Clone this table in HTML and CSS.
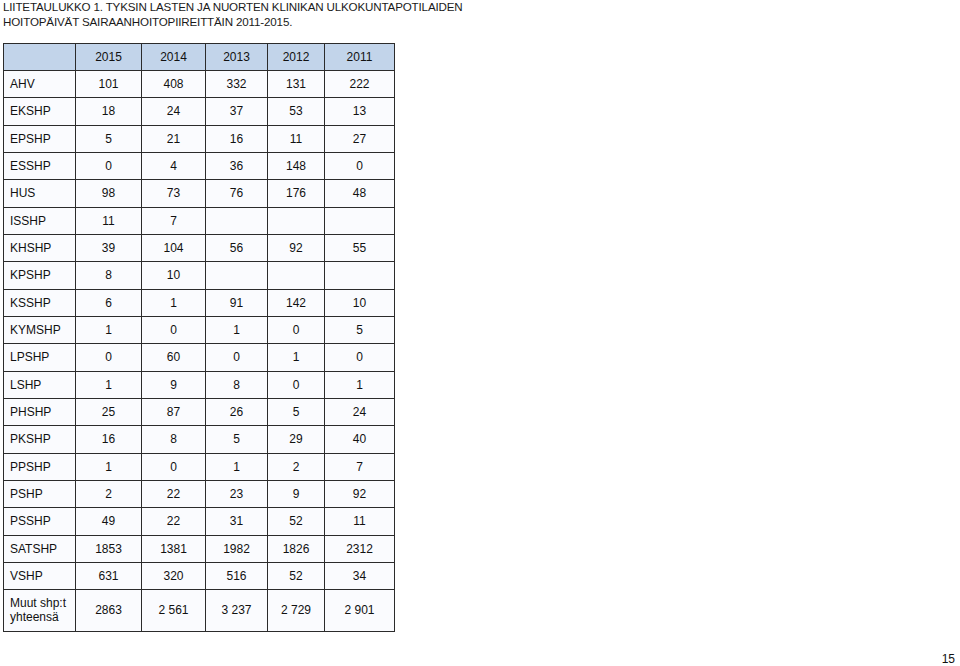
FILE: index.html
```html
<!DOCTYPE html>
<html>
<head>
<meta charset="utf-8">
<link rel="stylesheet" href="styles.css">
</head>
<body>
<div class="page">
  <div class="title">LIITETAULUKKO 1. TYKSIN LASTEN JA NUORTEN KLINIKAN ULKOKUNTAPOTILAIDEN<br>HOITOPÄIVÄT SAIRAANHOITOPIIREITTÄIN 2011-2015.</div>
  <table class="data">
    <colgroup>
      <col class="c0"><col class="c1"><col class="c2"><col class="c3"><col class="c4"><col class="c5">
    </colgroup>
    <thead>
      <tr class="head"><th></th><th>2015</th><th>2014</th><th>2013</th><th>2012</th><th>2011</th></tr>
    </thead>
    <tbody>
      <tr><td>AHV</td><td>101</td><td>408</td><td>332</td><td>131</td><td>222</td></tr>
      <tr><td>EKSHP</td><td>18</td><td>24</td><td>37</td><td>53</td><td>13</td></tr>
      <tr><td>EPSHP</td><td>5</td><td>21</td><td>16</td><td>11</td><td>27</td></tr>
      <tr><td>ESSHP</td><td>0</td><td>4</td><td>36</td><td>148</td><td>0</td></tr>
      <tr><td>HUS</td><td>98</td><td>73</td><td>76</td><td>176</td><td>48</td></tr>
      <tr><td>ISSHP</td><td>11</td><td>7</td><td></td><td></td><td></td></tr>
      <tr><td>KHSHP</td><td>39</td><td>104</td><td>56</td><td>92</td><td>55</td></tr>
      <tr><td>KPSHP</td><td>8</td><td>10</td><td></td><td></td><td></td></tr>
      <tr><td>KSSHP</td><td>6</td><td>1</td><td>91</td><td>142</td><td>10</td></tr>
      <tr><td>KYMSHP</td><td>1</td><td>0</td><td>1</td><td>0</td><td>5</td></tr>
      <tr><td>LPSHP</td><td>0</td><td>60</td><td>0</td><td>1</td><td>0</td></tr>
      <tr><td>LSHP</td><td>1</td><td>9</td><td>8</td><td>0</td><td>1</td></tr>
      <tr><td>PHSHP</td><td>25</td><td>87</td><td>26</td><td>5</td><td>24</td></tr>
      <tr><td>PKSHP</td><td>16</td><td>8</td><td>5</td><td>29</td><td>40</td></tr>
      <tr><td>PPSHP</td><td>1</td><td>0</td><td>1</td><td>2</td><td>7</td></tr>
      <tr><td>PSHP</td><td>2</td><td>22</td><td>23</td><td>9</td><td>92</td></tr>
      <tr><td>PSSHP</td><td>49</td><td>22</td><td>31</td><td>52</td><td>11</td></tr>
      <tr><td>SATSHP</td><td>1853</td><td>1381</td><td>1982</td><td>1826</td><td>2312</td></tr>
      <tr><td>VSHP</td><td>631</td><td>320</td><td>516</td><td>52</td><td>34</td></tr>
      <tr class="last"><td>Muut shp:t<br>yhteensä</td><td>2863</td><td>2 561</td><td>3 237</td><td>2 729</td><td>2 901</td></tr>
    </tbody>
  </table>
  <div class="pagenum">15</div>
</div>
</body>
</html>
```

FILE: styles.css
```css
html, body {
  margin: 0;
  padding: 0;
  background: #ffffff;
}
.page {
  width: 960px;
  height: 666px;
  display: flex;
  flex-direction: column;
  font-family: "Liberation Sans", Arial, sans-serif;
  color: #111111;
  box-sizing: border-box;
  padding: 0 0 0 3px;
  overflow: hidden;
}
.title {
  font-size: 11.6px;
  line-height: 15px;
  letter-spacing: -0.15px;
  margin-top: -1px;
  color: #1a1a1a;
}
.data {
  margin-top: 14px;
  border-collapse: collapse;
  table-layout: fixed;
  width: 391px;
  font-size: 12px;
}
.c0 { width: 72px; }
.c1 { width: 66px; }
.c2 { width: 64px; }
.c3 { width: 62px; }
.c4 { width: 57px; }
.c5 { width: 70px; }
.data th, .data td {
  border: 1.5px solid #2b2b2b;
  padding: 0;
  text-align: center;
  font-weight: normal;
  background: #fafbfe;
}
.data td:first-child {
  text-align: left;
  padding-left: 6px;
}
.head th {
  background: #c2d4ea;
  height: 26px;
}
.data tbody td {
  height: 26.33px;
}
.data tbody tr.last td {
  height: 40.5px;
  line-height: 14px;
}
.pagenum {
  margin-top: auto;
  align-self: flex-end;
  padding-right: 5px;
  font-size: 12px;
  line-height: 12px;
  margin-bottom: 1px;
}
```
